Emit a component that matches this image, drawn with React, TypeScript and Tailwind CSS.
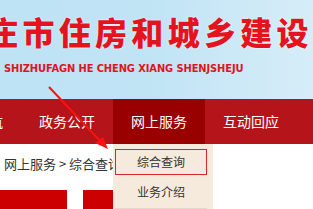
const NAV = [
  { label: '首页导航', active: false },
  { label: '政务公开', active: false },
  { label: '网上服务', active: true },
  { label: '互动回应', active: false },
];

const TITLE = '庄市住房和城乡建设局'.split('');

const CJK = "font-['Microsoft_YaHei','Noto_Sans_CJK_SC',sans-serif]";

export default function App() {
  return (
    <div className={`relative w-[313px] h-[209px] overflow-hidden bg-white ${CJK}`}>
      {/* Banner */}
      <div className="h-[99px] bg-gradient-to-r from-[#bde3f5] via-[#c1e4f5] to-[#d6edf8] pt-[9px]">
        <div className="ml-[-16px] flex whitespace-nowrap text-[32px] leading-[44px] font-black text-[#e3141f] [text-shadow:0_0_2px_#fff]">
          {TITLE.map((c, i) => (
            <span key={i} className="w-[36.3px] shrink-0 text-center">
              {c}
            </span>
          ))}
        </div>
        <div className="ml-[4px] mt-[10px] whitespace-nowrap font-['DejaVu_Sans_Condensed',sans-serif] text-[11px] leading-[12px] font-semibold tracking-[-0.1px] text-[#e0141e]">
          SHIZHUFAGN HE CHENG XIANG SHENJSHEJU
        </div>
      </div>

      {/* Nav */}
      <div className="flex h-[45px] bg-[#b4141a] ml-[-71px]">
        {NAV.map((n) => (
          <div
            key={n.label}
            className={`w-[92px] shrink-0 flex items-center justify-center text-[14px] text-white ${
              n.active ? 'bg-[#990000]' : ''
            }`}
          >
            {n.label}
          </div>
        ))}
      </div>

      {/* Content */}
      <div className="px-[4px] pt-[10px] text-[13px] leading-[20px] text-[#333]">
        网上服务 &gt; 综合查询
      </div>
      <div className="flex gap-[16px] mt-[16px]">
        <div className="w-[67px] h-[20px] bg-[#cc0000]" />
        <div className="w-[40px] h-[20px] bg-[#cc0000]" />
      </div>

      {/* Dropdown */}
      <div className="absolute left-[113px] top-[144px] w-[100px] h-[65px] bg-[#f6eadd] pt-[5px] pl-[2px] pr-[6px]">
        <div className="h-[26px] border border-[#d8282c] flex items-center justify-center text-[12px] text-[#333]">
          综合查询
        </div>
        <div className="h-[34px] flex items-center justify-center text-[12px] text-[#333] border-b border-[#e6d8c8]">
          业务介绍
        </div>
      </div>

      {/* Arrow */}
      <svg className="absolute left-0 top-0" width="313" height="209" viewBox="0 0 313 209">
        <line x1="49" y1="87" x2="103" y2="144" stroke="#ff1010" strokeWidth="2" />
        <polygon points="108,149 95,143 103,137" fill="#ff1010" />
      </svg>
    </div>
  );
}
